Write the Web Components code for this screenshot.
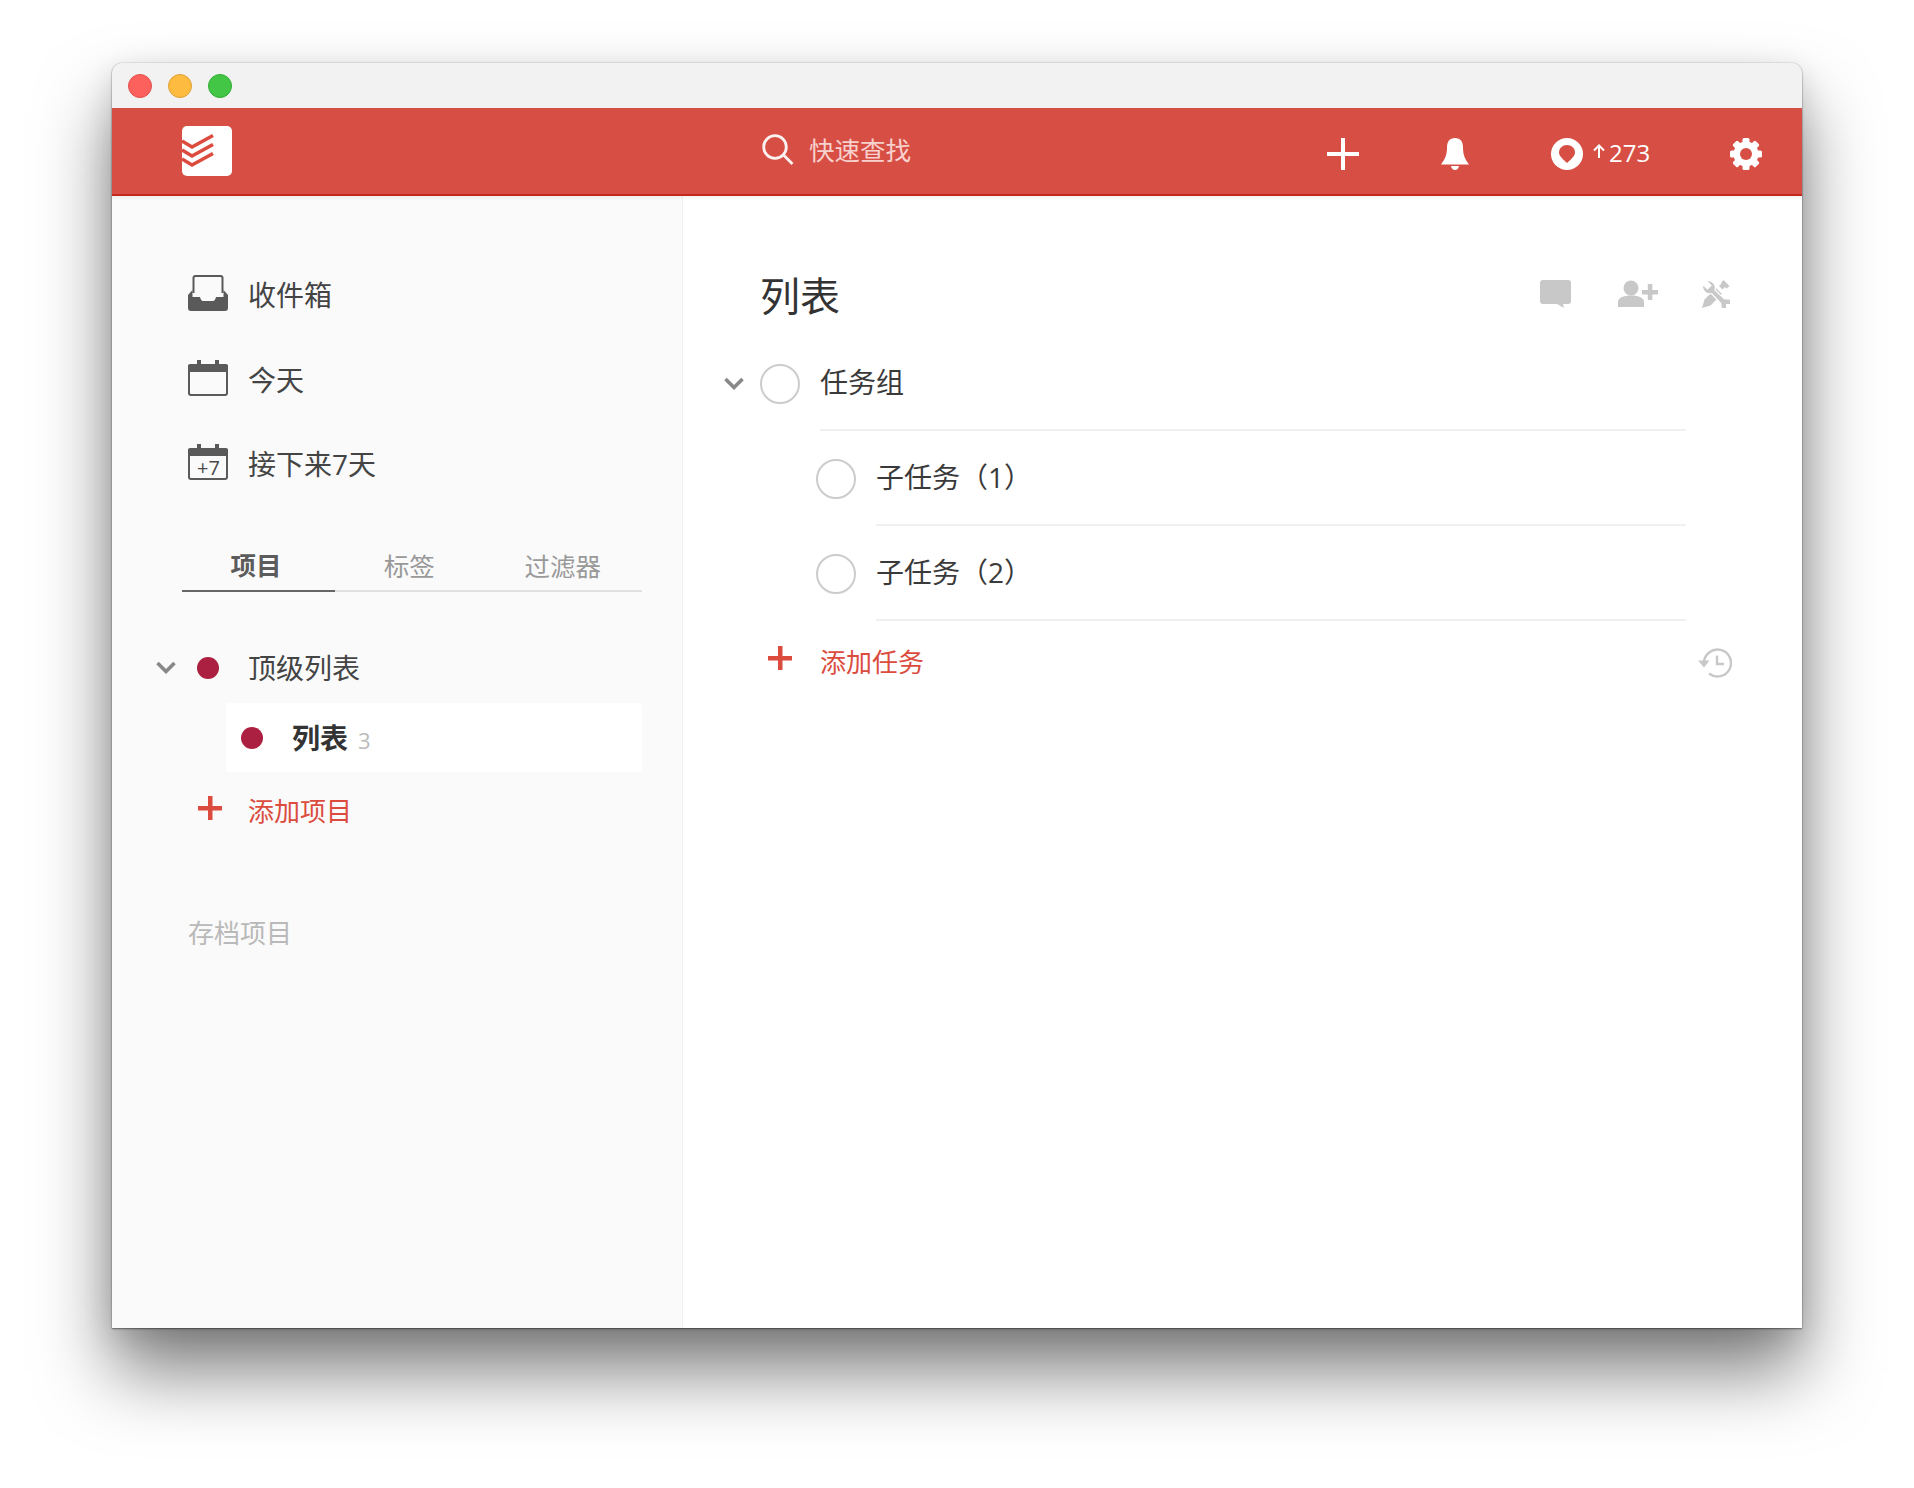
<!DOCTYPE html>
<html lang="zh"><head><meta charset="utf-8"><title>列表</title>
<style>
html,body{margin:0;background:#fff}
body{width:1914px;height:1488px;overflow:hidden;font:400 28px "Open Sans","Noto Sans CJK SC",sans-serif;color:#333}
app-window{margin:63px 0 0 112px}
</style></head><body>
<app-window>
  <title-bar></title-bar>
  <app-header></app-header>
  <div slot="side">
    <nav-item icon="inbox">收件箱</nav-item>
    <nav-item icon="today">今天</nav-item>
    <nav-item icon="week">接下来7天</nav-item>
    <tab-bar></tab-bar>
    <project-row chevron>顶级列表</project-row>
    <project-row selected count="3">列表</project-row>
    <add-row kind="side">添加项目</add-row>
    <archive-link>存档项目</archive-link>
  </div>
  <div slot="main">
    <main-head>列表</main-head>
    <task-row chevron>任务组</task-row>
    <task-row sub>子任务（1）</task-row>
    <task-row sub>子任务（2）</task-row>
    <add-row kind="main" history>添加任务</add-row>
  </div>
</app-window>
<script>
function def(name, html, init){
  customElements.define(name, class extends HTMLElement{
    constructor(){super();this.attachShadow({mode:'open'});}
    connectedCallback(){this.shadowRoot.innerHTML=typeof html==='function'?html(this):html;}
  });
}
def('app-window',`<style>
:host{display:flex;flex-direction:column;width:1690px;height:1265px;border-radius:10px 10px 0 0;background:#fff;
box-shadow:0 0 1px rgba(0,0,0,.5),0 1px 2px rgba(0,0,0,.45),0 44px 72px rgba(0,0,0,.5),0 8px 30px rgba(0,0,0,.12);overflow:visible}
.body{flex:1;display:flex;min-height:0}
.side{width:570px;background:#fafafa;border-right:1px solid #f1f1f1;box-sizing:content-box;padding-top:57px}
.main{flex:1;background:#fff}
</style><slot></slot><div class="body"><div class="side"><slot name="side"></slot></div><div class="main"><slot name="main"></slot></div></div>`);

def('title-bar',`<style>
:host{display:flex;align-items:center;gap:16px;height:45px;box-sizing:border-box;padding:1px 0 0 16px;background:#f2f2f2;border-radius:10px 10px 0 0}
i{width:24px;height:24px;border-radius:50%;box-sizing:border-box;border:1px solid}
.r{background:#fc615d;border-color:#e2504c}.y{background:#fdbc40;border-color:#dea035}.g{background:#43c645;border-color:#30ad33}
</style><i class="r"></i><i class="y"></i><i class="g"></i>`);

def('app-header',`<style>
:host{display:flex;align-items:center;height:88px;box-sizing:border-box;background:#d74f44;border-bottom:2px solid #c5281c;color:#fff;position:relative;box-shadow:0 2px 3px rgba(0,0,0,.05)}
svg{display:block;flex:none}
.logo{margin:0 0 0 70px}
.search{display:flex;align-items:center;margin:-2px 0 0 530px;width:565px;color:#f7d1ce;font-size:25.5px}
.search svg{margin-right:15px;margin-top:0}
.search span{position:relative;top:-2px}
.plus{margin-top:6px}
.bell{margin:6px 0 0 82px}
.karma{margin:6px 0 0 82px}
.arrow{margin:0 0 0 10px}
.num{font-size:24px;margin:4px 0 0 4px;width:121px;line-height:32px}
.gear{margin:6px 0 0 0}
</style>
<svg class="logo" width="50" height="50" viewBox="0 0 50 50"><rect width="50" height="50" rx="5" fill="#fff"/><g fill="none" stroke="#db4c3f" stroke-width="3.6"><path d="M0 15l10 6 21-11.500"/><path d="M0 24l10 6 21-11.500"/><path d="M0 33l10 6 21-11.500"/></g></svg>
<div class="search"><svg width="32" height="32" viewBox="0 0 32 32" fill="none" stroke="#fff" stroke-width="2.8" opacity=".92"><circle cx="13" cy="13" r="11.300"/><path d="M21.500 21l9 9"/></svg><span>快速查找</span></div>
<svg class="plus" width="32" height="32" viewBox="0 0 32 32" fill="#fff"><rect x="14" width="4" height="32"/><rect y="14" width="32" height="4"/></svg>
<svg class="bell" width="28" height="32" viewBox="0 0 28 32" fill="#fff"><path d="M14 0c5.500 0 8 3.700 8 9.500 0 6.500 1.500 11 6 17H0c4.500-6 6-10.500 6-17C6 3.700 8.500 0 14 0z"/><path d="M10 28h8c-.6 2.600-2 4-4 4s-3.400-1.400-4-4z"/></svg>
<svg class="karma" width="32" height="32" viewBox="0 0 32 32"><circle cx="16" cy="16" r="16" fill="#fff"/><path d="M16 7c4.500 0 8 3.200 8 7.500 0 3-2.500 5.500-8 10.500-5.500-5-8-7.500-8-10.500C8 10.200 11.500 7 16 7z" fill="#d74f44"/></svg>
<svg class="arrow" width="12" height="14" viewBox="0 0 12 14" fill="none" stroke="#fff" stroke-width="2"><path d="M6 14V2M1 6.500l5-5 5 5"/></svg>
<span class="num">273</span>
<svg class="gear" width="32" height="32" viewBox="0 0 32 32"><g fill="#fff"><rect x="12.500" y="0" width="7" height="32" rx="1.500"/><rect x="12.500" y="0" width="7" height="32" rx="1.500" transform="rotate(45 16 16)"/><rect x="12.500" y="0" width="7" height="32" rx="1.500" transform="rotate(90 16 16)"/><rect x="12.500" y="0" width="7" height="32" rx="1.500" transform="rotate(135 16 16)"/><circle cx="16" cy="16" r="12.500"/></g><circle cx="16" cy="16" r="6" fill="#d74f44"/></svg>`);

const cal=(extra)=>`<svg width="40" height="36" viewBox="0 0 40 36"><path d="M1 6h38v27a2 2 0 0 1-2 2H3a2 2 0 0 1-2-2z" fill="none" stroke="#5a5a5a" stroke-width="2"/><path d="M0 12V6a2 2 0 0 1 2-2h7V0h4v4h14V0h4v4h7a2 2 0 0 1 2 2v6z" fill="#5a5a5a"/>${extra||''}</svg>`;
const icons={
 inbox:`<svg width="40" height="36" viewBox="0 0 40 36"><path d="M5.500 18V3a2 2 0 0 1 2-2h25a2 2 0 0 1 2 2v15" fill="none" stroke="#5a5a5a" stroke-width="2"/><path d="M0 20l4.500-5v7H12q1 4 3 4h10q2 0 3-4h7.500v-7l4.500 5v13a3 3 0 0 1-3 3H3a3 3 0 0 1-3-3z" fill="#5a5a5a"/></svg>`,
 today:cal(),
 week:cal(`<text x="20.500" y="30.500" text-anchor="middle" font-family="Open Sans" font-size="20" fill="#4a4a4a">+7</text>`)
};
def('nav-item',h=>`<style>
:host{display:flex;align-items:center;height:84.500px;padding-left:76px;color:#444}
svg{display:block;margin:0 20px 4px 0;flex:none}
span{position:relative;top:-1px}
</style>${icons[h.getAttribute('icon')]}<span><slot></slot></span>`);
def('tab-bar',`<style>
:host{display:flex;height:54px;box-sizing:border-box;margin:31px 0 41px 70px;width:460px;border-bottom:2px solid #e0e0e0;font-size:25.5px;color:#999}
div{flex:1;display:flex;align-items:center;justify-content:center;margin-bottom:-2px;padding:0 5px 0 0;box-sizing:border-box}
.on{flex:0 0 153px;color:#5c5c5c;font-weight:700;border-bottom:2px solid #666}
</style><div class="on">项目</div><div>标签</div><div>过滤器</div>`);
const chev=`<svg class="chev" width="20" height="13" viewBox="0 0 20 13" fill="none" stroke="#888" stroke-width="3.600"><path d="M1.500 2l8.500 8.500L18.500 2"/></svg>`;
def('project-row',h=>{const sel=h.hasAttribute('selected');return `<style>
:host{display:flex;align-items:center;height:${sel?69:70}px;${sel?'margin:0 0 0 114px;width:416px;background:#fff;border-radius:4px;padding:2px 0 0 15px;box-sizing:border-box;font-weight:700':'padding-left:44px;color:#444'}}
svg{display:block;flex:none}
.slot{width:20px;margin-right:21px}
i{width:22px;height:22px;border-radius:50%;background:#ab2040;flex:none;margin-right:29px}
b{font:400 22px "Open Sans",sans-serif;color:#bbb;margin:3px 0 0 10px}
span{position:relative;top:-1px}
</style>${sel?'':`<div class="slot">${h.hasAttribute('chevron')?chev:''}</div>`}<i></i><span><slot></slot></span>${h.getAttribute('count')?`<b>${h.getAttribute('count')}</b>`:''}`;});
const redplus=`<svg width="24" height="24" viewBox="0 0 24 24" fill="#db4c3f"><rect x="10" width="4.500" height="24"/><rect y="10" width="24" height="4.500"/></svg>`;
def('add-row',h=>{const side=h.getAttribute('kind')==='side';return `<style>
:host{display:flex;align-items:center;color:#db4c3f;font-size:26px;height:${side?80:78}px;padding-left:${side?86:85}px}
svg{display:block;flex:none}
.p{margin:${side?-7:-5}px ${side?26:28}px 0 0;height:24px}
span{position:relative;top:${side?-2:1}px;flex:1}
.h{margin:5px 70px 0 0}
</style><div class="p">${redplus}</div><span><slot></slot></span>${h.hasAttribute('history')?`<svg class="h" width="34" height="30" viewBox="0 0 34 30" fill="none" stroke="#c8c8c8" stroke-width="2.400"><path d="M6 15a13.500 13.500 0 1 1 5 10.500"/><path d="M19 7.500v8.500h7"/><path d="M0 12.500h11.500L6 19.500z" fill="#c8c8c8" stroke="none"/></svg>`:''}`;});
def('archive-link',`<style>:host{display:block;margin:63px 0 0 76px;color:#b9b9b9;font-size:26px;line-height:36px}</style><slot></slot>`);
def('main-head',`<style>
:host{display:flex;align-items:center;height:140px;padding:58px 0 0 77px;box-sizing:border-box;font-size:40px;color:#333}
span{flex:1;position:relative;top:-1px}
svg{display:block;flex:none;margin-bottom:3px}
.a{margin-right:47px}.b{margin-right:44px}.c{margin-right:72px}
</style><span><slot></slot></span>
<svg class="a" width="31" height="28" viewBox="0 0 31 28" fill="#c8c8c8"><path d="M3 0h25a3 3 0 0 1 3 3v18a3 3 0 0 1-3 3h-5l1 4-7-4H3a3 3 0 0 1-3-3V3a3 3 0 0 1 3-3z"/></svg>
<svg class="b" width="40" height="27" viewBox="0 0 40 27" fill="#c8c8c8"><circle cx="13" cy="8" r="7.500"/><path d="M0 27v-5c0-4 5-6.500 13-6.500s13 2.500 13 6.500v5z"/><rect x="24" y="10" width="16" height="4.500"/><rect x="29.800" y="4" width="4.500" height="16"/></svg>
<svg class="c" width="28" height="28" viewBox="0 0 28 28"><g fill="#c8c8c8"><path d="M0 28l2.500-8.500L14 8l6 6L8.500 25.500z"/><path d="M17 6l2.500-2.500 1.500 1.500-2.500 2.500zM20.500 9.500l-2-2 2.500-2.500 2 2zM19 3l2.500-3 6 6-3 2.500z"/><path d="M1 4.500L5.500 9l3.500-3.500L4.500 1a7 7 0 0 1 8.500 9l14 13-4.500 4.500-13-14A7 7 0 0 1 1 4.500z" stroke="#fff" stroke-width="1.200"/><path d="M20 20h7.500a5.500 5.500 0 0 1-7.500 7.500z" stroke="#c8c8c8" stroke-width="1"/></g><path d="M24 24l4 0 0 4-4 0z" fill="#fff"/></svg>`);
def('task-row',h=>{const sub=h.hasAttribute('sub');return `<style>
:host{display:block;padding-left:${sub?133:41}px}
.row{display:flex;align-items:center;height:95px;box-sizing:border-box}
.c{width:20px;margin-right:16px;flex:none}
svg{display:block}
i{width:40px;height:40px;box-sizing:border-box;border:2px solid #ccc;border-radius:50%;flex:none;margin-right:20px}
.t{flex:1;align-self:stretch;display:flex;align-items:center;border-bottom:2px solid #f0f0f0;margin-right:116px;position:relative}
span{position:relative;top:-2px;color:#3a3a3a}
</style><div class="row">${sub?'':`<div class="c">${h.hasAttribute('chevron')?chev:''}</div>`}<i></i><div class="t"><span><slot></slot></span></div></div>`;});
</script>
</body></html>
